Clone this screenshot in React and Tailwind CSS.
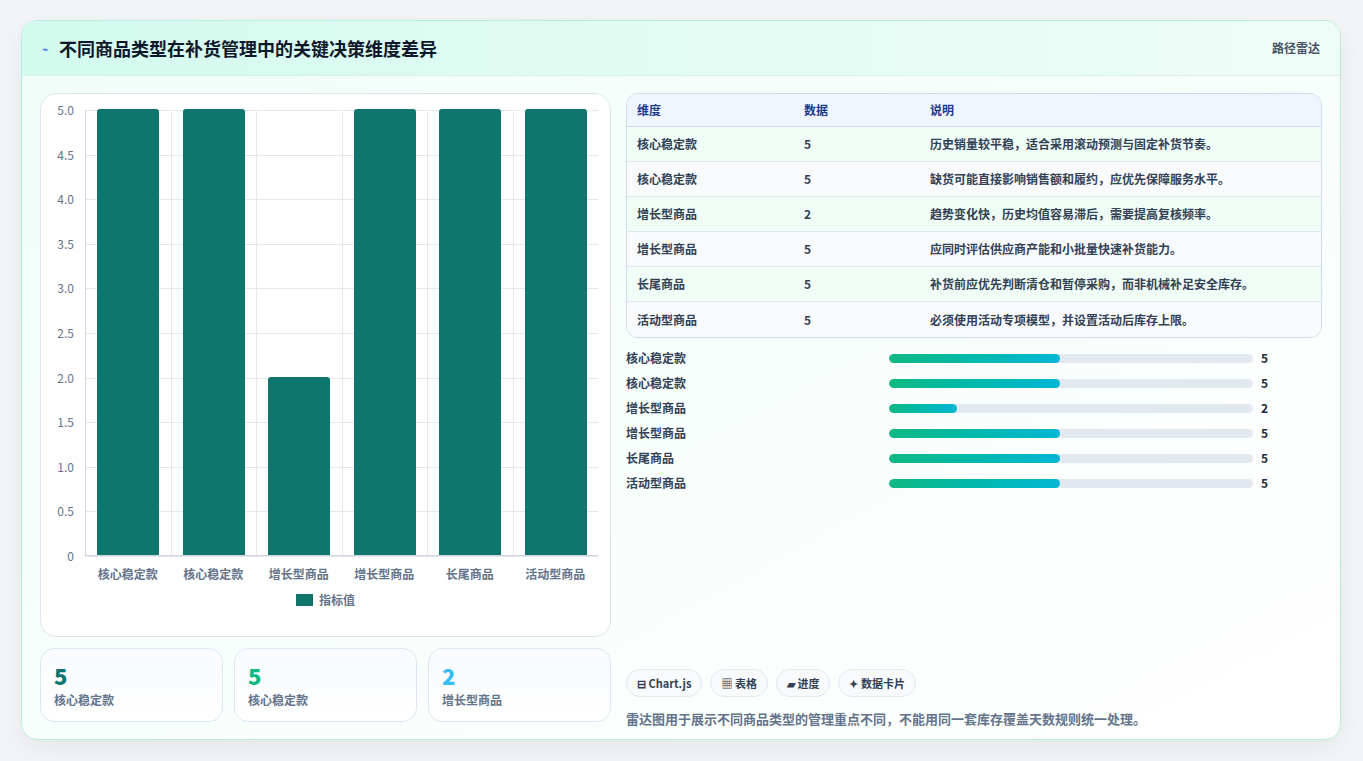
import React from "react";

const cats = ["核心稳定款","核心稳定款","增长型商品","增长型商品","长尾商品","活动型商品"];
const vals = [5,5,2,5,5,5];
const desc = ["历史销量较平稳，适合采用滚动预测与固定补货节奏。","缺货可能直接影响销售额和履约，应优先保障服务水平。","趋势变化快，历史均值容易滞后，需要提高复核频率。","应同时评估供应商产能和小批量快速补货能力。","补货前应优先判断清仓和暂停采购，而非机械补足安全库存。","必须使用活动专项模型，并设置活动后库存上限。"];
const ticks = ["5.0","4.5","4.0","3.5","3.0","2.5","2.0","1.5","1.0","0.5","0"];

function Chart() {
  const H = 446;
  return (
    <div className="flex flex-col h-full pt-[16px]">
      <div className="flex">
        <div className="w-[44px] relative h-[446px]">
          {ticks.map((t, i) => (
            <div key={i} className="absolute right-[11px] text-[12px] text-[#64748b] leading-none" style={{ top: i * (H / 10) - 6 }}>{t}</div>
          ))}
        </div>
        <div className="relative flex-1 mr-[12px] h-[446px] border-l border-b border-[#cbd5e1]">
          {ticks.map((t, i) => (
            <div key={i} className="absolute left-0 right-0 border-t border-[#e5e7eb]" style={{ top: i * (H / 10) }} />
          ))}
          <div className="absolute inset-0 flex">
            {vals.map((v, i) => (
              <div key={i} className="flex-1 flex items-end justify-center border-r border-[#e5e7eb] last:border-r-0">
                <div className="w-[62px] bg-[#0f766e] rounded-t-[3px]" style={{ height: (v / 5) * H }} />
              </div>
            ))}
          </div>
        </div>
      </div>
      <div className="flex ml-[44px] mr-[12px] mt-[9px]">
        {cats.map((c, i) => (
          <div key={i} className="flex-1 text-center text-[12px] font-bold text-[#64748b]">{c}</div>
        ))}
      </div>
      <div className="flex items-center justify-center gap-[6px] mt-[8px]">
        <div className="w-[17px] h-[12px] bg-[#0f766e]" />
        <span className="text-[12px] font-bold text-[#64748b]">指标值</span>
      </div>
    </div>
  );
}

export default function App() {
  return (
    <div className="w-[1363px] h-[761px] bg-[#f3f4f6] pt-[20px] pl-[21px]" style={{ fontFamily: '"Noto Sans CJK SC", "Noto Sans", sans-serif' }}>
      <div className="w-[1320px] h-[720px] rounded-[16px] border border-[#b8ecde] bg-gradient-to-br from-[#f0fdf8] to-[#ffffff] overflow-hidden shadow-[0_8px_24px_rgba(0,0,0,0.06)] flex flex-col">
        <div className="h-[55px] shrink-0 flex items-center justify-between px-[20px] bg-gradient-to-r from-[#d3faee] to-[#effdf8] border-b border-[#d5f3e9]">
          <div className="flex items-center gap-[10px]">
            <span className="text-[#2563eb] text-[11px]">⌁</span>
            <span className="text-[18px] font-bold text-[#0f172a]">不同商品类型在补货管理中的关键决策维度差异</span>
          </div>
          <span className="text-[12px] font-bold text-[#475569]">路径雷达</span>
        </div>
        <div className="flex gap-[15px] px-[18px] pt-[17px]">
          <div className="w-[571px] flex flex-col gap-[11px]">
            <div className="h-[544px] bg-white rounded-[16px] border border-[#dbe4ee]">
              <Chart />
            </div>
            <div className="flex gap-[11px]">
              {[["5","#0f766e","核心稳定款"],["5","#10b981","核心稳定款"],["2","#38bdf8","增长型商品"]].map(([n,c,l],i)=>(
                <div key={i} className="flex-1 h-[74px] rounded-[14px] border border-[#dbe7f3] bg-gradient-to-b from-[#f8fbff] to-white px-[13px] pt-[12px]">
                  <div className="text-[22px] font-black leading-[28px]" style={{ color: c }}>{n}</div>
                  <div className="text-[12px] font-bold text-[#64748b] mt-[2px]">{l}</div>
                </div>
              ))}
            </div>
          </div>
          <div className="flex-1 flex flex-col">
            <div className="rounded-[12px] border border-[#cfdbe8] overflow-hidden">
              <div className="h-[33px] flex items-center bg-[#eff6ff] border-b border-[#cfdbe8] text-[12px] font-bold text-[#1e3a8a] px-[10px]">
                <div className="w-[167px]">维度</div><div className="w-[126px]">数据</div><div>说明</div>
              </div>
              {cats.map((c, i) => (
                <div key={i} className={"h-[35px] flex items-center px-[10px] text-[12px] font-bold text-[#334155] border-b border-[#e2e8f0] last:border-b-0 " + (i % 2 === 0 ? "bg-[#f0fdf6]" : "bg-[#f8fafc]")}>
                  <div className="w-[167px]">{c}</div><div className="w-[126px]">{vals[i]}</div><div>{desc[i]}</div>
                </div>
              ))}
            </div>
            <div className="flex flex-col gap-[9px] mt-[12px]">
              {cats.map((c, i) => (
                <div key={i} className="flex items-center h-[16px]">
                  <div className="w-[263px] text-[12px] font-bold text-[#334155]">{c}</div>
                  <div className="w-[364px] h-[9px] rounded-full bg-[#e2e8f0] overflow-hidden">
                    <div className="h-full rounded-full bg-gradient-to-r from-[#10b981] to-[#06b6d4]" style={{ width: `${vals[i] * 9.4}%` }} />
                  </div>
                  <div className="ml-[8px] text-[12px] font-bold text-[#1e293b]">{vals[i]}</div>
                </div>
              ))}
            </div>
            <div className="flex gap-[8px] mt-[178px]">
              {["⊟ Chart.js","▦ 表格","▰ 进度","✦ 数据卡片"].map((t, i) => (
                <div key={i} className="h-[28px] px-[10px] flex items-center rounded-full border border-[#e2e8f0] bg-[#f8fafc] text-[11px] font-bold text-[#334155]">{t}</div>
              ))}
            </div>
            <div className="mt-[12px] text-[13px] font-bold text-[#64748b]">雷达图用于展示不同商品类型的管理重点不同，不能用同一套库存覆盖天数规则统一处理。</div>
          </div>
        </div>
      </div>
    </div>
  );
}
